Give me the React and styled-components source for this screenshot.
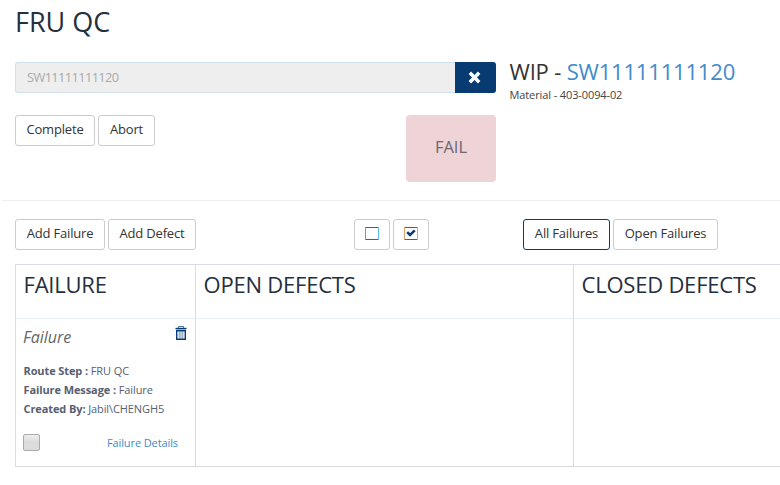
import React from 'react';
import styled, { createGlobalStyle } from 'styled-components';

const Global = createGlobalStyle`
  * { box-sizing: border-box; }
  html, body { margin: 0; background: #fff; overflow: hidden; }
  body { font-family: "Open Sans", sans-serif; font-size: 13px; color: #333; }
`;

const Page = styled.div`
  width: 780px;
  height: 485px;
  overflow: hidden;
`;

const Title = styled.h1`
  margin: 0;
  padding-left: 15px;
  height: 62px;
  font-size: 27px;
  font-weight: 390;
  line-height: 44px;
  color: #252f3e;
`;

const Top = styled.section`
  display: flex;
  gap: 14px;
  height: 138px;
  padding-left: 15px;
`;

const Entry = styled.div`
  width: 481px;
`;

const InputGroup = styled.div`
  display: flex;
  height: 31px;
`;

const Field = styled.div`
  flex: 1;
  padding-left: 11px;
  border: 1px solid #cfdfeb;
  border-right: 0;
  border-radius: 3px 0 0 3px;
  background: #eee;
  color: #aaa;
  font-size: 12.8px;
  line-height: 29px;
  letter-spacing: -0.6px;
`;

const Clear = styled.button`
  display: flex;
  align-items: center;
  justify-content: center;
  width: 41px;
  padding: 0 3px 0 0;
  border: 0;
  border-radius: 0 3px 3px 0;
  background: #073b71;
`;

const Actions = styled.div`
  display: flex;
  align-items: flex-start;
  gap: 3px;
  margin-top: 22px;
`;

const Button = styled.button`
  display: flex;
  align-items: center;
  justify-content: center;
  width: ${(p) => p.$w}px;
  height: 31px;
  padding: 0 0 3px;
  border: 1px solid ${(p) => (p.$active ? '#073b71' : '#ccc')};
  border-radius: 3px;
  background: #fff;
  color: #333;
  font: 400 13px "Open Sans", sans-serif;
  letter-spacing: -0.18px;
  white-space: nowrap;
`;

const Result = styled.div`
  width: 90px;
  height: 67px;
  margin-left: auto;
  border-radius: 4px;
  background: #eed3d7;
  color: #6b6872;
  font-size: 16.5px;
  line-height: 64px;
  text-align: center;
`;

const Wip = styled.h2`
  margin: -2px 0 0 -0.5px;
  font-size: 22px;
  font-weight: 390;
  line-height: 22px;
  letter-spacing: -0.18px;
  white-space: nowrap;
  color: #333;
`;

const Serial = styled.span`
  color: #428bca;
`;

const Material = styled.p`
  margin: 5px 0 0 -0.5px;
  font-size: 11px;
  line-height: 16px;
  letter-spacing: -0.11px;
  color: #444;
`;

const Rule = styled.hr`
  height: 1px;
  margin: 0 0 0 2px;
  border: 0;
  background: #eee;
`;

const Toolbar = styled.nav`
  display: grid;
  grid-template-columns: 339px 169px 1fr;
  margin: 18px 0 14px 15px;
`;

const Group = styled.div`
  display: flex;
  gap: 3px;
`;

const Board = styled.section`
  display: grid;
  grid-template-columns: 180px 378px 400px;
  grid-template-rows: 54px 147px;
  width: 958px;
  margin-left: 15px;
  border-top: 1px solid #d9dce1;
  border-bottom: 1px solid #d9dadc;
`;

const Heading = styled.h3`
  margin: 0;
  padding-left: 7.5px;
  border-left: 1px solid #d9dce1;
  border-bottom: 1px solid #e9eff3;
  font-size: 22px;
  font-weight: 390;
  line-height: 39px;
  letter-spacing: -0.22px;
  color: #252f3e;
`;

const Cell = styled.div`
  border-left: 1px solid #d9dce1;
`;

const Card = styled.article`
  padding: 0 17px 0 7px;
`;

const CardHead = styled.header`
  display: flex;
  justify-content: space-between;
  height: 42px;
  margin-right: -9px;
`;

const CardTitle = styled.h4`
  margin: 0;
  font-size: 16px;
  font-style: italic;
  font-weight: 400;
  line-height: 36px;
  color: #666;
`;

const TrashIcon = styled.svg`
  margin-top: 7px;
`;

const Detail = styled.p`
  margin: 0;
  padding-left: 0.5px;
  font-size: 11px;
  line-height: 19px;
  letter-spacing: -0.1px;
  white-space: nowrap;
  color: #566070;
`;

const CardFoot = styled.footer`
  display: flex;
  align-items: center;
  justify-content: space-between;
  margin-top: 16px;
`;

const Check = styled.span`
  width: 17px;
  height: 17px;
  border: 1px solid #aaa;
  border-radius: 2px;
  background: linear-gradient(#eee, #dcdcdc 45%);
`;

const Link = styled.a`
  font-size: 11px;
  line-height: 15px;
  letter-spacing: -0.1px;
  color: #428bca;
`;

const Square = ({ checked }) => (
  <svg width="14" height="13" viewBox="0 0 14 13" shapeRendering="crispEdges">
    <path d="M0 .5H14M0 12.5H14" stroke="#3f6088" />
    <path d="M.5 0V13" stroke={checked ? '#e2a16d' : '#739cad'} />
    <path d="M13.5 0V13" stroke={checked ? '#e2a16d' : '#59bfe7'} />
    {checked && (
      <path d="M3.2 5.2L6 8L10.8 3.4" fill="none" stroke="#073b71" strokeWidth="2.5" shapeRendering="auto" />
    )}
  </svg>
);

export default function App() {
  return (
    <Page>
      <Global />
      <Title>FRU QC</Title>
      <Top>
        <Entry>
          <InputGroup>
            <Field>SW11111111120</Field>
            <Clear aria-label="Clear">
              <svg width="13" height="13" viewBox="0 0 12 12">
                <path d="M1.7 1.7L10.3 10.3M10.3 1.7L1.7 10.3" stroke="#fff" strokeWidth="3.2" />
              </svg>
            </Clear>
          </InputGroup>
          <Actions>
            <Button $w={80}>Complete</Button>
            <Button $w={57}>Abort</Button>
            <Result>FAIL</Result>
          </Actions>
        </Entry>
        <div>
          <Wip>WIP - <Serial>SW11111111120</Serial></Wip>
          <Material>Material - 403-0094-02</Material>
        </div>
      </Top>
      <Rule />
      <Toolbar>
        <Group>
          <Button $w={90}>Add Failure</Button>
          <Button $w={88}>Add Defect</Button>
        </Group>
        <Group>
          <Button $w={36} aria-label="Clear selection"><Square /></Button>
          <Button $w={36} aria-label="Select all"><Square checked /></Button>
        </Group>
        <Group>
          <Button $w={87} $active>All Failures</Button>
          <Button $w={105}>Open Failures</Button>
        </Group>
      </Toolbar>
      <Board>
        <Heading>FAILURE</Heading>
        <Heading>OPEN DEFECTS</Heading>
        <Heading>CLOSED DEFECTS</Heading>
        <Cell>
          <Card>
            <CardHead>
              <CardTitle>Failure</CardTitle>
              <TrashIcon width="12" height="14" viewBox="0 0 12 14">
                <path d="M3.5 2.5V.5H8.5V2.5" fill="none" stroke="#4c7695" />
                <path d="M.5 2.5H11.5" stroke="#073b71" strokeWidth="1.4" />
                <path d="M1.7 4.5H10.3V13.2H1.7Z" fill="#fff" stroke="#073b71" strokeWidth="1.4" />
                <path d="M1 4.8H11" stroke="#073b71" />
                <path d="M4.2 5V13M6 5V13M7.8 5V13" stroke="#527b99" strokeWidth=".8" />
              </TrashIcon>
            </CardHead>
            <Detail><b>Route Step :</b> FRU QC</Detail>
            <Detail><b>Failure Message :</b> Failure</Detail>
            <Detail><b>Created By:</b> Jabil\CHENGH5</Detail>
            <CardFoot>
              <Check />
              <Link>Failure Details</Link>
            </CardFoot>
          </Card>
        </Cell>
        <Cell />
        <Cell />
      </Board>
    </Page>
  );
}
